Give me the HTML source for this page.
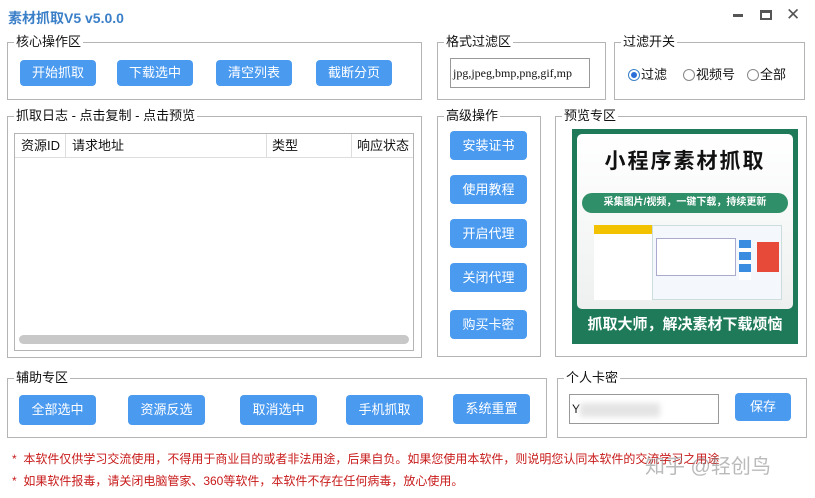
<!DOCTYPE html>
<html><head><meta charset="utf-8"><style>
*{margin:0;padding:0;box-sizing:border-box}
body{width:815px;height:498px;background:#fff;position:relative;overflow:hidden;font-family:"Liberation Sans","Noto Sans CJK SC",sans-serif;font-size:13px;color:#111}
.a{position:absolute}
.g{position:absolute;border:1px solid #b4b4b4}
.lg{position:absolute;background:#fff;padding:0 2px;font-size:13px;line-height:16px;top:-9px;left:6px}
.b{position:absolute;background:#4a9af0;color:#fff;border-radius:4px;text-align:center;font-size:13px}
.rad{display:inline-block;width:12px;height:12px;border:1px solid #888;border-radius:50%;vertical-align:-2px;margin-right:1px;position:relative}
.red{color:#c81a1a;font-size:12px}
</style></head><body>
<div class="a" style="left:8px;top:8px;color:#3a7fc8;font-weight:bold;font-size:14px">素材抓取V5 v5.0.0</div>
<div class="a" style="left:733px;top:14px;width:10px;height:3px;background:#555"></div>
<div class="a" style="left:760px;top:10px;width:12px;height:10px;border:2px solid #555;border-top-width:3px"></div>
<div class="a" style="left:786px;top:5px;font-size:17px;color:#555">✕</div>

<div class="g" style="left:7px;top:42px;width:415px;height:58px"><div class="lg">核心操作区</div></div>
<div class="b" style="left:20px;top:60px;width:76px;height:26px;line-height:26px">开始抓取</div>
<div class="b" style="left:117px;top:60px;width:76px;height:26px;line-height:26px">下载选中</div>
<div class="b" style="left:216px;top:60px;width:76px;height:26px;line-height:26px">清空列表</div>
<div class="b" style="left:316px;top:60px;width:76px;height:26px;line-height:26px">截断分页</div>

<div class="g" style="left:7px;top:116px;width:415px;height:242px"><div class="lg">抓取日志 - 点击复制 - 点击预览</div></div>
<div class="a" style="left:14px;top:133px;width:400px;height:218px;border:1px solid #b4b4b4">
 <div class="a" style="left:0;top:0;width:398px;height:24px;border-bottom:1px solid #ddd;line-height:24px;font-size:13px">
  <span class="a" style="left:6px">资源ID</span><span class="a" style="left:57px">请求地址</span><span class="a" style="left:257px">类型</span><span class="a" style="left:342px">响应状态</span>
  <div class="a" style="left:50px;top:0;width:1px;height:24px;background:#ddd"></div>
  <div class="a" style="left:251px;top:0;width:1px;height:24px;background:#ddd"></div>
  <div class="a" style="left:336px;top:0;width:1px;height:24px;background:#ddd"></div>
 </div>
 <div class="a" style="left:4px;top:201px;width:390px;height:9px;background:#c8c8c8;border-radius:5px"></div>
</div>

<div class="g" style="left:437px;top:42px;width:169px;height:58px"><div class="lg">格式过滤区</div></div>
<div class="a" style="left:450px;top:58px;width:140px;height:30px;border:1px solid #999;font-family:'Liberation Serif',serif;font-size:12px;line-height:28px;padding-left:2px;overflow:hidden;white-space:nowrap">jpg,jpeg,bmp,png,gif,mp</div>

<div class="g" style="left:614px;top:42px;width:191px;height:58px"><div class="lg">过滤开关</div></div>
<div class="a" style="left:628px;top:64px;font-size:13px;white-space:nowrap"><span class="rad" style="border-color:#3a7fc8"><span class="a" style="left:2px;top:2px;width:6px;height:6px;border-radius:50%;background:#2a6fd8"></span></span>过滤</div>
<div class="a" style="left:683px;top:64px;font-size:13px;white-space:nowrap"><span class="rad"></span>视频号</div>
<div class="a" style="left:747px;top:64px;font-size:13px;white-space:nowrap"><span class="rad"></span>全部</div>

<div class="g" style="left:437px;top:116px;width:104px;height:241px"><div class="lg">高级操作</div></div>
<div class="b" style="left:450px;top:131px;width:77px;height:29px;line-height:29px">安装证书</div>
<div class="b" style="left:450px;top:175px;width:77px;height:29px;line-height:29px">使用教程</div>
<div class="b" style="left:450px;top:219px;width:77px;height:29px;line-height:29px">开启代理</div>
<div class="b" style="left:450px;top:263px;width:77px;height:29px;line-height:29px">关闭代理</div>
<div class="b" style="left:450px;top:310px;width:77px;height:29px;line-height:29px">购买卡密</div>

<div class="g" style="left:555px;top:116px;width:252px;height:241px"><div class="lg">预览专区</div></div>
<div class="a" style="left:572px;top:129px;width:226px;height:215px;background:#1e7a58">
 <div class="a" style="left:5px;top:5px;width:216px;height:175px;background:linear-gradient(#fff,#eef0f0);border-radius:5px"></div>
 <div class="a" style="left:0;top:16px;width:226px;text-align:center;font-size:21px;font-weight:bold;color:#111;letter-spacing:2px">小程序素材抓取</div>
 <div class="a" style="left:10px;top:64px;width:206px;height:20px;border-radius:10px;background:#2f8f68;color:#fff;font-size:10px;font-weight:bold;text-align:center;line-height:20px">采集图片/视频，一键下载，持续更新</div>
 <div class="a" style="left:22px;top:96px;width:58px;height:75px;background:#fff;border-top:9px solid #f2c200"></div>
 <div class="a" style="left:80px;top:96px;width:130px;height:75px;background:#f4f7fb;border:1px solid #cdd">
  <div class="a" style="left:3px;top:12px;width:80px;height:38px;background:#fff;border:1px solid #aac"></div>
  <div class="a" style="left:86px;top:14px;width:12px;height:40px;background:linear-gradient(#3a8ce0 0 20%,#fff 20% 30%,#3a8ce0 30% 50%,#fff 50% 60%,#3a8ce0 60% 80%,#fff 80%)"></div>
  <div class="a" style="left:104px;top:16px;width:22px;height:30px;background:#e84a3a"></div>
 </div>
 <div class="a" style="left:0;top:184px;width:226px;text-align:center;font-size:15px;font-weight:bold;color:#fff">抓取大师，解决素材下载烦恼</div>
</div>

<div class="g" style="left:7px;top:378px;width:540px;height:60px"><div class="lg">辅助专区</div></div>
<div class="b" style="left:19px;top:395px;width:77px;height:30px;line-height:30px">全部选中</div>
<div class="b" style="left:128px;top:395px;width:77px;height:30px;line-height:30px">资源反选</div>
<div class="b" style="left:240px;top:395px;width:77px;height:30px;line-height:30px">取消选中</div>
<div class="b" style="left:346px;top:395px;width:77px;height:30px;line-height:30px">手机抓取</div>
<div class="b" style="left:453px;top:394px;width:77px;height:30px;line-height:30px">系统重置</div>

<div class="g" style="left:557px;top:378px;width:250px;height:60px"><div class="lg">个人卡密</div></div>
<div class="a" style="left:569px;top:394px;width:150px;height:30px;border:1px solid #999;line-height:28px;padding-left:2px;font-size:12px">Y<span style="display:inline-block;width:80px;height:14px;background:#e4e4e4;vertical-align:middle;filter:blur(3px)"></span></div>
<div class="b" style="left:735px;top:393px;width:56px;height:28px;line-height:28px">保存</div>

<div class="a red" style="left:12px;top:450px">* &nbsp;本软件仅供学习交流使用，不得用于商业目的或者非法用途，后果自负。如果您使用本软件，则说明您认同本软件的交流学习之用途</div>
<div class="a red" style="left:12px;top:472px">* &nbsp;如果软件报毒，请关闭电脑管家、360等软件，本软件不存在任何病毒，放心使用。</div>
<div class="a" style="left:645px;top:450px;font-size:20px;color:rgba(140,140,140,0.6)">知乎 @轻创鸟</div>
</body></html>
